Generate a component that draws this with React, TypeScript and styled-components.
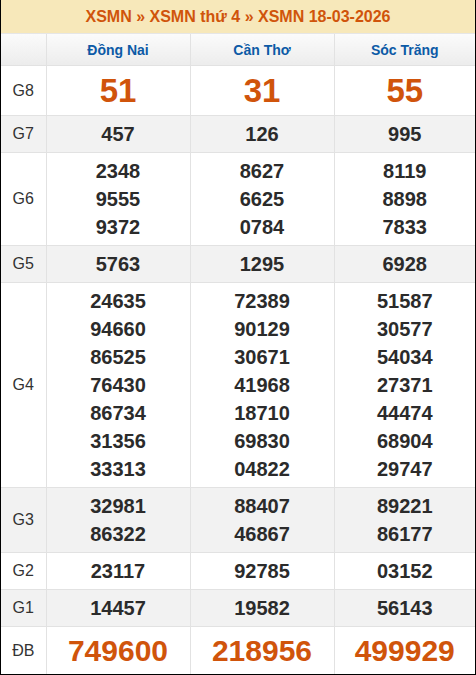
import React from "react";
import styled, { createGlobalStyle } from "styled-components";

const Global = createGlobalStyle`
  html, body { margin: 0; padding: 0; background: #fff; }
  body, table, th, td { font-family: "Liberation Sans", Arial, sans-serif; }
`;

const Wrap = styled.div`
  width: 476px;
  height: 675px;
  box-sizing: border-box;
  border-left: 1px solid #000;
  border-right: 1px solid #000;
  border-bottom: 1px solid #000;
  overflow: hidden;
  font-family: "Liberation Sans", Arial, sans-serif;
`;

const Title = styled.div`
  height: 34px;
  background: #f7e8ba;
  display: flex;
  align-items: center;
  justify-content: center;
  color: #d0540b;
  font-weight: bold;
  font-size: 16px;
  border-bottom: 1px solid #e6e6e6;
  box-sizing: border-box;
`;

const Table = styled.table`
  width: 100%;
  border-collapse: collapse;
  table-layout: fixed;
  font-family: "Liberation Sans", Arial, sans-serif;
`;

const HeadCell = styled.th`
  height: 31px;
  padding: 0;
  background: linear-gradient(#fbfbfb, #ececec);
  color: #0c5aa6;
  font-size: 14px;
  font-weight: bold;
  text-align: center;
  border-left: 1px solid #e2e2e2;
  border-bottom: 1px solid #e2e2e2;
  &:first-child { border-left: none; }
`;

const Row = styled.tr<{ $alt: boolean }>`
  background: ${(p) => (p.$alt ? "#f2f2f2" : "#fff")};
`;

const Label = styled.td`
  padding: 0;
  text-align: center;
  font-size: 16px;
  color: #333;
  border-bottom: 1px solid #e2e2e2;
`;

const Cell = styled.td`
  padding: 4px 0;
  text-align: center;
  border-left: 1px solid #e2e2e2;
  border-bottom: 1px solid #e2e2e2;
  vertical-align: middle;
`;

const Num = styled.div<{ $size: "big" | "huge" | "normal" }>`
  font-weight: bold;
  font-size: ${(p) => (p.$size === "big" ? "33px" : p.$size === "huge" ? "30px" : "20px")};
  line-height: ${(p) => (p.$size === "big" ? "41px" : p.$size === "huge" ? "39px" : "28px")};
  color: ${(p) => (p.$size === "normal" ? "#2b2b2b" : "#d0540b")};
`;

type Prize = { label: string; size: "big" | "huge" | "normal"; cols: string[][] };

const prizes: Prize[] = [
  { label: "G8", size: "big", cols: [["51"], ["31"], ["55"]] },
  { label: "G7", size: "normal", cols: [["457"], ["126"], ["995"]] },
  {
    label: "G6",
    size: "normal",
    cols: [
      ["2348", "9555", "9372"],
      ["8627", "6625", "0784"],
      ["8119", "8898", "7833"],
    ],
  },
  { label: "G5", size: "normal", cols: [["5763"], ["1295"], ["6928"]] },
  {
    label: "G4",
    size: "normal",
    cols: [
      ["24635", "94660", "86525", "76430", "86734", "31356", "33313"],
      ["72389", "90129", "30671", "41968", "18710", "69830", "04822"],
      ["51587", "30577", "54034", "27371", "44474", "68904", "29747"],
    ],
  },
  {
    label: "G3",
    size: "normal",
    cols: [
      ["32981", "86322"],
      ["88407", "46867"],
      ["89221", "86177"],
    ],
  },
  { label: "G2", size: "normal", cols: [["23117"], ["92785"], ["03152"]] },
  { label: "G1", size: "normal", cols: [["14457"], ["19582"], ["56143"]] },
  { label: "ĐB", size: "huge", cols: [["749600"], ["218956"], ["499929"]] },
];

export default function App() {
  return (
    <>
      <Global />
      <Wrap>
        <Title>XSMN » XSMN thứ 4 » XSMN 18-03-2026</Title>
        <Table>
          <colgroup>
            <col style={{ width: 45 }} />
            <col style={{ width: 144 }} />
            <col style={{ width: 144 }} />
            <col />
          </colgroup>
          <thead>
            <tr>
              <HeadCell />
              <HeadCell>Đồng Nai</HeadCell>
              <HeadCell>Cần Thơ</HeadCell>
              <HeadCell>Sóc Trăng</HeadCell>
            </tr>
          </thead>
          <tbody>
            {prizes.map((p, i) => (
              <Row key={p.label} $alt={i % 2 === 1}>
                <Label>{p.label}</Label>
                {p.cols.map((c, j) => (
                  <Cell key={j}>
                    {c.map((n, k) => (
                      <Num key={k} $size={p.size}>
                        {n}
                      </Num>
                    ))}
                  </Cell>
                ))}
              </Row>
            ))}
          </tbody>
        </Table>
      </Wrap>
    </>
  );
}
